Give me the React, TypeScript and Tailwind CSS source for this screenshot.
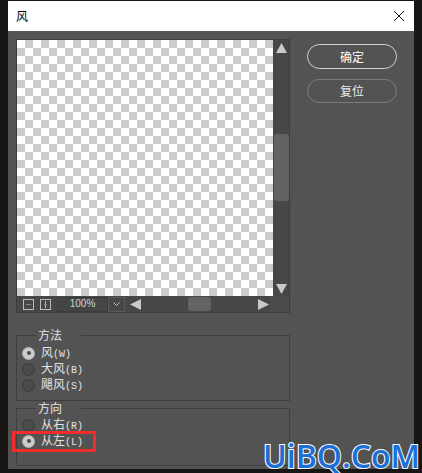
const cjk = "font-['Noto_Sans_CJK_SC','Microsoft_YaHei',sans-serif]";
const mono = "font-['Liberation_Mono',monospace] text-[10px]";

function Radio({ checked }: { checked?: boolean }) {
  return checked ? (
    <span className="w-[13px] h-[13px] rounded-full bg-[#cdcdcd] border border-[#b4b4b4] flex items-center justify-center shrink-0">
      <span className="w-[4px] h-[4px] rounded-full bg-[#474747]" />
    </span>
  ) : (
    <span className="w-[13px] h-[13px] rounded-full bg-[#4a4a4a] border border-[#3a3a3a] shrink-0" />
  );
}

function Option({ zh, hot, checked }: { zh: string; hot: string; checked?: boolean }) {
  return (
    <div className="h-[16px] flex items-center gap-[6px]">
      <Radio checked={checked} />
      <span className="text-[12px] leading-none text-[#e4e4e4]">
        {zh}
        <span className={mono}>({hot})</span>
      </span>
    </div>
  );
}

function Tri({ dir }: { dir: "up" | "down" | "left" | "right" }) {
  const pts = {
    up: "5.5,0 11,10 0,10",
    down: "0,0 11,0 5.5,10",
    left: "11,0 11,11 0,5.5",
    right: "0,0 0,11 11,5.5",
  }[dir];
  const vertical = dir === "up" || dir === "down";
  return (
    <svg viewBox={vertical ? "0 0 11 10" : "0 0 11 11"} className={vertical ? "w-[11px] h-[10px]" : "w-[11px] h-[11px]"}>
      <polygon points={pts} fill="#c9c9c9" />
    </svg>
  );
}

export default function App() {
  return (
    <div className={`relative w-[422px] h-[473px] overflow-hidden bg-[#171614] flex items-start ${cjk}`}>
      <div className="ml-[8px] mt-[1px] w-[406px] h-[468px] flex flex-col">
        {/* title bar */}
        <div className="h-[30px] bg-white flex items-center justify-between pl-[8px] pr-[10px]">
          <span className="text-[12px] text-black">风</span>
          <svg viewBox="0 0 10 10" className="w-[10px] h-[10px]">
            <path d="M0 0L10 10M10 0L0 10" stroke="#111" strokeWidth="1" />
          </svg>
        </div>

        {/* body */}
        <div className="flex-1 bg-[#535353] pl-[8px] pt-[8px] flex">
          <div className="w-[274px] flex flex-col">
            {/* preview */}
            <div className="h-[274px] border border-[#3d3d3d] flex flex-col">
              <div className="h-[256px] flex">
                <div className="w-[256px] h-[256px] bg-[image:conic-gradient(#cccccc_25%,#ffffff_0_50%,#cccccc_0_75%,#ffffff_0)] bg-[length:16px_16px]" />
                <div className="w-[16px] bg-[#474747] flex flex-col items-center">
                  <div className="mt-[3px]">
                    <Tri dir="up" />
                  </div>
                  <div className="mt-[81px] w-[15px] h-[67px] rounded-[3px] bg-[#636363]" />
                  <div className="flex-1" />
                  <div className="mb-[2px]">
                    <Tri dir="down" />
                  </div>
                </div>
              </div>
              <div className="h-[16px] flex items-center bg-[#474747]">
                <svg viewBox="0 0 11 11" className="ml-[6px] w-[11px] h-[11px]">
                  <rect x="0.5" y="0.5" width="10" height="10" fill="none" stroke="#bdbdbd" />
                  <rect x="3" y="5" width="5" height="1" fill="#8a8a8a" />
                </svg>
                <svg viewBox="0 0 11 11" className="ml-[6px] w-[11px] h-[11px]">
                  <rect x="0.5" y="0.5" width="10" height="10" fill="none" stroke="#bdbdbd" />
                  <rect x="5" y="2" width="1" height="7" fill="#bdbdbd" />
                  <rect x="4" y="5" width="3" height="1" fill="#8a8a8a" />
                </svg>
                <div className="ml-[6px] w-[51px] h-[15px] bg-[#454545] border border-[#3c3c3c] flex items-center justify-center">
                  <span className="font-['Liberation_Sans',sans-serif] text-[10px] text-[#d2d2d2] leading-none">100%</span>
                </div>
                <div className="w-[17px] h-[15px] border border-[#5a5a5a] bg-[#474747] flex items-center justify-center">
                  <svg viewBox="0 0 7 4" className="w-[7px] h-[4px]">
                    <path d="M0.5 0.5L3.5 3.5L6.5 0.5" fill="none" stroke="#bdbdbd" />
                  </svg>
                </div>
                <div className="ml-[5px]">
                  <Tri dir="left" />
                </div>
                <div className="ml-[47px] w-[23px] h-[14px] rounded-[3px] bg-[#636363]" />
                <div className="ml-[47px]">
                  <Tri dir="right" />
                </div>
                <div className="flex-1 self-stretch ml-[1px] bg-[#4b4b4b]" />
              </div>
            </div>

            {/* 方法 */}
            <fieldset className="mt-[15px] border border-[#3e3e3e] pl-[5px] pt-[3px] pb-[7px]">
              <legend className="ml-[14px] pl-[2px] pr-[19px] text-[12px] leading-[14px] text-[#e4e4e4]">方法</legend>
              <Option zh="风" hot="W" checked />
              <Option zh="大风" hot="B" />
              <Option zh="飓风" hot="S" />
            </fieldset>

            {/* 方向 */}
            <fieldset className="border border-[#3e3e3e] pl-[5px] pt-[2px] pb-[16px]">
              <legend className="ml-[14px] pl-[2px] pr-[19px] text-[12px] leading-[14px] text-[#e4e4e4]">方向</legend>
              <Option zh="从右" hot="R" />
              <div className="relative">
                <Option zh="从左" hot="L" checked />
                <div className="absolute left-[-10px] top-[-2px] w-[84px] h-[21px] border-[3px] border-[#ee2d2d]" />
              </div>
            </fieldset>
          </div>

          {/* buttons */}
          <div className="ml-[17px] mt-[5px] flex flex-col gap-[10px]">
            <button className="w-[90px] h-[25px] rounded-full border-[1.5px] border-[#d0d0d0] text-[12px] text-white flex items-center justify-center">
              确定
            </button>
            <button className="w-[90px] h-[24px] rounded-full border-[1.5px] border-[#7c7c7c] text-[12px] text-[#ececec] flex items-center justify-center">
              复位
            </button>
          </div>
        </div>
      </div>

      {/* watermark */}
      <div className="absolute left-[263px] top-[440px] font-['Open_Sans',sans-serif] font-semibold text-[32px] leading-[32px] text-[#1b6fd6] [-webkit-text-stroke:2px_#ffffff] [paint-order:stroke_fill] whitespace-nowrap">
        UiBQ.CoM
      </div>
    </div>
  );
}
